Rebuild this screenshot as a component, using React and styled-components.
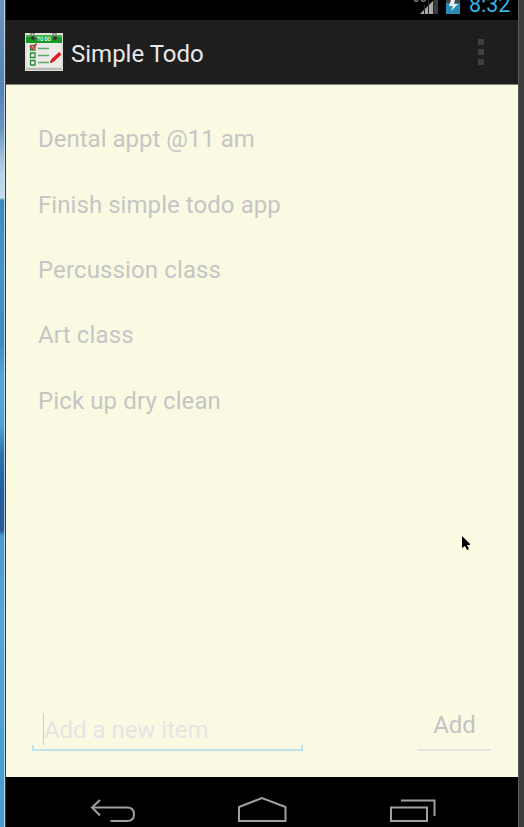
import React from "react";
import styled, { createGlobalStyle } from "styled-components";

const GlobalStyle = createGlobalStyle`
  * { box-sizing: border-box; }
  html, body { margin: 0; padding: 0; overflow: hidden; background: #000; }
  body { font-family: Roboto, "Noto Sans", sans-serif; }
  svg { display: block; }
`;

const Desktop = styled.div`
  position: relative;
  display: grid;
  grid-template-columns: 6px 512px 6px;
  width: 524px;
  height: 827px;
  overflow: hidden;
`;

const Wallpaper = styled.div`
  border-right: 1px solid #1d3f5e;
  background:
    linear-gradient(90deg, transparent 4px, rgba(215, 232, 245, 0.75) 4px),
    linear-gradient(180deg,
      #6f94bf 0, #5583b4 90px, #6c95bf 130px, #a3c3de 158px, #b2d4e9 172px, #c9dbeb 198px,
      #4089b8 200px, #4396c8 270px, #3d8abd 340px, #54a8d9 378px, #4fa3d5 425px,
      #2d72ad 455px, #205f9f 490px, #2b599a 530px, #4b9bce 536px, #52a7d8 620px, #459ccf 827px);
`;

const WindowEdge = styled.div`
  border-left: 1px solid #5b5b58;
  background: #3d3d3d;
`;

const Device = styled.div`
  display: flex;
  flex-direction: column;
  height: 827px;
  overflow: hidden;
`;

const StatusBar = styled.div`
  display: flex;
  justify-content: flex-end;
  height: 20px;
  background: #000;
`;

const Clock = styled.span`
  width: 49px;
  margin-top: -8px;
  color: #33b5e5;
  font-size: 21.5px;
  line-height: 26px;
  white-space: nowrap;
`;

const ActionBar = styled.header`
  display: flex;
  align-items: center;
  height: 65px;
  padding: 0 33px 0 19px;
  border-bottom: 1px solid #85847c;
  background: #1e1e1e;
`;

const Title = styled.h1`
  flex: 1;
  margin: 3px 0 0 8px;
  color: #e9e7e7;
  font-size: 24px;
  font-weight: 400;
  line-height: 32px;
`;

const Overflow = styled.div`
  display: grid;
  gap: 4px;
  margin-right: 1px;
  i { width: 6px; height: 6px; background: #404040; }
`;

const Content = styled.main`
  display: flex;
  flex: 1;
  flex-direction: column;
  justify-content: space-between;
  background: #fafae3;
`;

const TodoList = styled.ul`
  margin: 0;
  padding: 22.2px 32px 0;
  list-style: none;
`;

const TodoItem = styled.li`
  height: 65.35px;
  color: #c6c5c5;
  font-size: 24px;
  line-height: 65px;
  letter-spacing: ${({ $tracking }) => $tracking}px;
`;

const Composer = styled.div`
  display: flex;
  justify-content: space-between;
  height: 75px;
  padding: 0 27px 0 26px;
`;

const Field = styled.div`
  display: flex;
  flex-direction: column;
  width: 271px;
  height: 49px;
`;

const Hint = styled.div`
  height: 32px;
  margin: 11px 0 0 11px;
  padding-top: 1px;
  border-left: 1px solid #cfcfbd;
  color: #e6e4e5;
  font-size: 24px;
  line-height: 32px;
  letter-spacing: -0.04px;
`;

const Underline = styled.div`
  height: 6px;
  border: 2px solid #bfe2ed;
  border-top: 0;
`;

const AddButton = styled.button`
  width: 74px;
  height: 49px;
  padding: 0 0 1px 1px;
  border: 0;
  border-bottom: 2px solid #e6e5e5;
  border-radius: 1px;
  background: transparent;
  color: #c3c2c4;
  font-family: inherit;
  font-size: 24px;
  line-height: 45px;
`;

const NavigationBar = styled.nav`
  display: flex;
  height: 50px;
  background: #000;
`;

const Pointer = styled.svg`
  position: absolute;
  left: 462px;
  top: 536px;
`;

const items = [
  { label: "Dental appt @11 am", tracking: 0 },
  { label: "Finish simple todo app", tracking: 0.06 },
  { label: "Percussion class", tracking: 0.12 },
  { label: "Art class", tracking: 0.16 },
  { label: "Pick up dry clean", tracking: 0.12 },
];

function StatusIcons() {
  return (
    <svg width="55" height="20" viewBox="414 0 55 20">
      <path d="M414 .3q2.5 2 4 0M421 .3q2.5 2 4.5-.3" fill="none" stroke="#8c8c8c" strokeWidth="1.3" />
      <path d="M438 0v14H420L434 0z" fill="#3d3d3d" />
      <path d="M420 14L433 1v13z" fill="#aaa" />
      <path d="M424.5 5v9M428.5 0v14M433.5 0v14" stroke="#242424" strokeWidth="1" />
      <path d="M446 0h14v14h-14z" fill="#298db7" />
      <path d="M446 0h14v3h-14z" fill="#444" />
      <path d="M451 0h4l-1 4h4l-7 7 2-5h-4z" fill="#eee" />
    </svg>
  );
}

function TodoLogo() {
  return (
    <svg width="38" height="38" viewBox="0 0 38 38">
      <path d="M0 0h38v38H0z" fill="#dededb" />
      <path d="M1 35h36v2H1z" fill="#b9b9b6" />
      <path d="M2 9h34v25H2z" fill="#ecebea" />
      <path d="M1 2h36v8H1z" fill="#159a22" />
      <path d="M1 2h36v2H1z" fill="#42ba4c" />
      <g fill="#353535"><circle cx="8" cy="5" r="2" /><circle cx="30" cy="5" r="2" /></g>
      <path d="M6 5V0h3v4M28 5V0h3v4" fill="none" stroke="#666" />
      <text x="19" y="8" textAnchor="middle" fill="#edf8e9" fontFamily="Roboto, sans-serif" fontSize="5" fontWeight="700" textLength="14">TO DO</text>
      <g fill="none" stroke="#298b36" strokeWidth="1.3">
        <path d="M5.5 12.5h4.5v4.5H5.5zM5.5 20h4.5v4.5H5.5zM5.5 27.5h4.5v4.5H5.5z" />
        <path d="M13 15.5h11M13 22.5h11M13 29.5h11" stroke="#62a66b" />
      </g>
      <path d="M5 13l2.5 3L11.5 10.5" fill="none" stroke="#df2927" strokeWidth="1.6" />
      <path d="M25 30l1.5-4L34 19l2.5 2.5L29 28.5z" fill="#e51b23" />
      <path d="M25 30l1-3 2 2z" fill="#8f2022" />
    </svg>
  );
}

function NavigationIcons() {
  return (
    <svg width="512" height="50" viewBox="6 777 512 50" fill="none" stroke="#a0a09d" strokeWidth="2">
      <path d="M92 807.5h35q7 0 7 6.7t-7 6.8h-16.5" />
      <path d="M100 800l-8 7.5 8 8" />
      <path d="M239 821v-14l23-9 23.5 9v14z" />
      <path d="M391 807.5h36V821h-36zM401 800.5h33.5V816" />
    </svg>
  );
}

export default function App() {
  return (
    <>
      <GlobalStyle />
      <Desktop>
        <Wallpaper />
        <Device>
          <StatusBar>
            <StatusIcons />
            <Clock>8:32</Clock>
          </StatusBar>
          <ActionBar>
            <TodoLogo />
            <Title>Simple Todo</Title>
            <Overflow><i /><i /><i /></Overflow>
          </ActionBar>
          <Content>
            <TodoList>
              {items.map(({ label, tracking }) => (
                <TodoItem key={label} $tracking={tracking}>{label}</TodoItem>
              ))}
            </TodoList>
            <Composer>
              <Field>
                <Hint>Add a new item</Hint>
                <Underline />
              </Field>
              <AddButton>Add</AddButton>
            </Composer>
          </Content>
          <NavigationBar><NavigationIcons /></NavigationBar>
        </Device>
        <WindowEdge />
        <Pointer width="9" height="15" viewBox="0 0 9 15" aria-hidden="true">
          <path d="M0 0l8 8v1H5l2 4-2 1-2-4-3 2z" fill="#000" />
        </Pointer>
      </Desktop>
    </>
  );
}
